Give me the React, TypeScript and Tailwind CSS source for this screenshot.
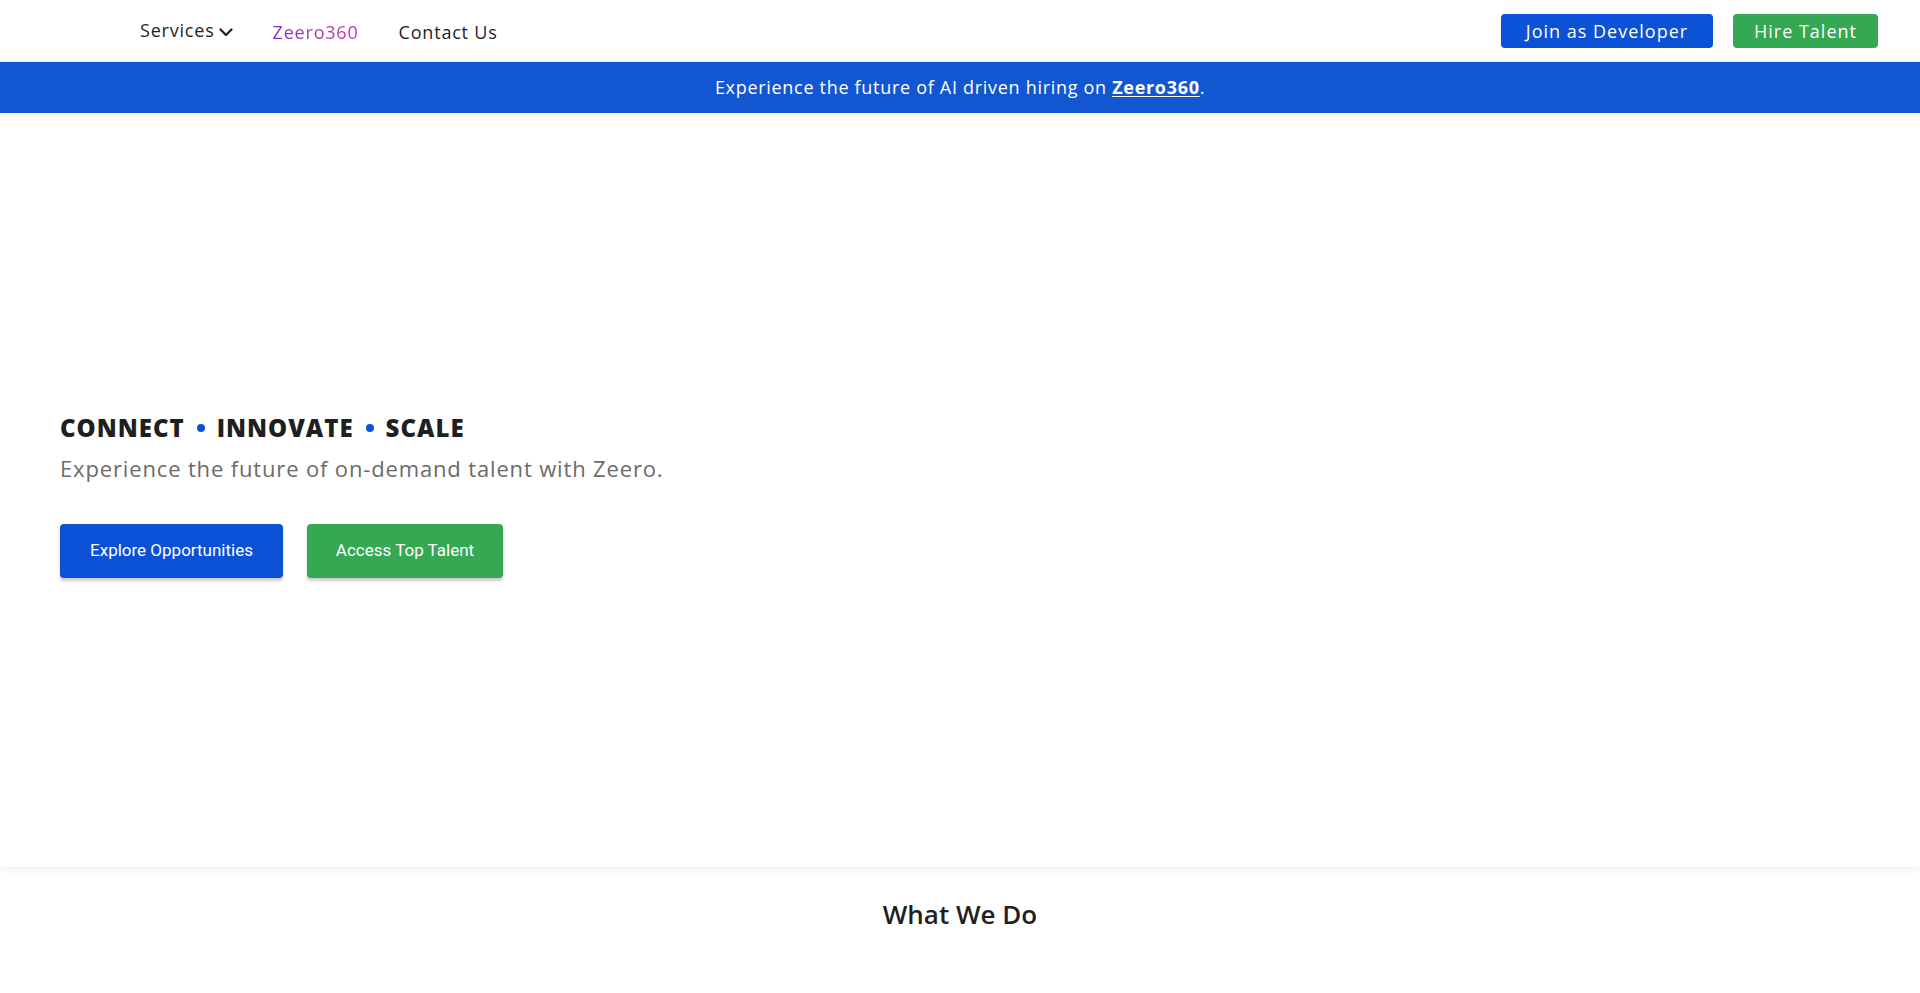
export default function App() {
    return (
        <div className="min-h-screen bg-white font-['Open_Sans',sans-serif] text-[#1f1f1f]">
            {/* top nav */}
            <header className="h-[62px] flex items-center justify-between pl-[140px] pr-[42px] border-b border-[#e8ecf3]">
                <nav className="flex items-center gap-[40px] text-[18px] tracking-[0.8px] pt-[3px]">
                    <button className="flex items-center gap-[4px] -mt-[3px] text-[#1f1f1f] tracking-[0.8px]">
                        Services
                        <svg width="14" height="9" viewBox="0 0 14 9" className="mt-[3px]">
                            <polyline points="1.5,1.5 7,7 12.5,1.5" fill="none" stroke="#1f1f1f" strokeWidth="2.2" strokeLinecap="round" strokeLinejoin="round" />
                        </svg>
                    </button>
                    <a className="bg-gradient-to-r from-[#8430d2] to-[#d12ba4] bg-clip-text text-transparent">
                        Zeero360
                    </a>
                    <a className="text-[#1f1f1f]">Contact Us</a>
                </nav>
                <div className="flex items-center gap-[20px] pt-[1px]">
                    <button className="h-[34px] w-[212px] rounded-[4px] bg-[#0c52d6] text-white text-[18px] font-medium tracking-[1px]">
                        Join as Developer
                    </button>
                    <button className="h-[34px] w-[145px] rounded-[4px] bg-[#34a853] text-white text-[18px] font-medium tracking-[1px]">
                        Hire Talent
                    </button>
                </div>
            </header>

            {/* announcement */}
            <div className="h-[51px] flex items-center justify-center bg-[#1256d2] text-white text-[18px] font-medium tracking-[0.7px]">
                Experience the future of AI driven hiring on&nbsp;
                <a className="font-bold underline underline-offset-2">Zeero360</a>.
            </div>

            {/* hero */}
            <section className="h-[754px] flex items-center px-[60px] shadow-[0_4px_6px_rgba(0,0,0,0.05)]">
                <div className="mt-[8px]">
                    <h1 className="flex items-center gap-[12px] text-[24px] font-extrabold tracking-[1px] text-[#1f1f1f]">
                        <span>CONNECT</span>
                        <span className="w-[8px] h-[8px] rounded-full bg-[#0c52d6]" />
                        <span>INNOVATE</span>
                        <span className="w-[8px] h-[8px] rounded-full bg-[#0c52d6]" />
                        <span>SCALE</span>
                    </h1>
                    <p className="mt-[6px] text-[22px] tracking-[0.85px] text-[#6b6b6b]">
                        Experience the future of on-demand talent with Zeero.
                    </p>
                    <div className="mt-[39px] flex gap-[24px] font-['Roboto',sans-serif]">
                        <button className="h-[54px] w-[223px] rounded-[4px] bg-[#0b51d6] text-white text-[17px] shadow-[0_3px_3px_rgba(0,0,0,0.2)]">
                            Explore Opportunities
                        </button>
                        <button className="h-[54px] w-[196px] rounded-[4px] bg-[#34a853] text-white text-[17px] shadow-[0_3px_3px_rgba(0,0,0,0.2)]">
                            Access Top Talent
                        </button>
                    </div>
                </div>
            </section>

            {/* what we do */}
            <section className="pt-[28px] flex justify-center">
                <h2 className="text-[26px] font-semibold text-[#1f1f1f]">What We Do</h2>
            </section>
        </div>
    );
}
